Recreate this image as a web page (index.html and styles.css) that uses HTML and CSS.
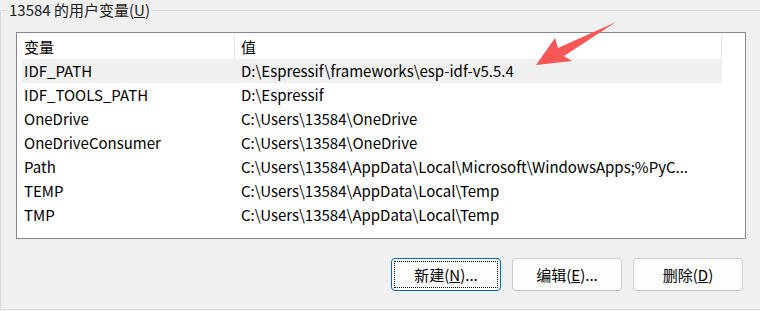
FILE: index.html
```html
<!DOCTYPE html>
<html lang="zh-CN">
<head>
  <meta charset="UTF-8">
  <title>用户变量</title>
  <link rel="stylesheet" href="styles.css">
</head>
<body>
  <fieldset class="group">
    <legend>13584 的用户变量(<u>U</u>)</legend>

    <div class="listview">
      <div class="header">
        <div class="hcell name">变量</div>
        <div class="hcell value">值</div>
      </div>
      <div class="row hover">
        <div class="cell name">IDF_PATH</div>
        <div class="cell value">D:\Espressif\frameworks\esp-idf-v5.5.4</div>
      </div>
      <div class="row">
        <div class="cell name">IDF_TOOLS_PATH</div>
        <div class="cell value">D:\Espressif</div>
      </div>
      <div class="row">
        <div class="cell name">OneDrive</div>
        <div class="cell value">C:\Users\13584\OneDrive</div>
      </div>
      <div class="row">
        <div class="cell name">OneDriveConsumer</div>
        <div class="cell value">C:\Users\13584\OneDrive</div>
      </div>
      <div class="row">
        <div class="cell name">Path</div>
        <div class="cell value">C:\Users\13584\AppData\Local\Microsoft\WindowsApps;%PyC...</div>
      </div>
      <div class="row">
        <div class="cell name">TEMP</div>
        <div class="cell value">C:\Users\13584\AppData\Local\Temp</div>
      </div>
      <div class="row">
        <div class="cell name">TMP</div>
        <div class="cell value">C:\Users\13584\AppData\Local\Temp</div>
      </div>
    </div>

    <div class="buttons">
      <button class="focused"><span>新建(<u>N</u>)...</span></button>
      <button><span>编辑(<u>E</u>)...</span></button>
      <button><span>删除(<u>D</u>)</span></button>
    </div>
  </fieldset>

  <!-- red annotation arrow pointing at the IDF_PATH value -->
  <svg class="arrow" width="760" height="311" viewBox="0 0 760 311">
    <polygon points="536,65 555,38 558,48 616,22 564,56 572,61" fill="#f75757"/>
  </svg>
</body>
</html>
```

FILE: styles.css
```css
html, body {
  margin: 0;
  padding: 0;
}

body {
  width: 760px;
  height: 311px;
  overflow: hidden;
  background: #f0f0f0;
  font-family: "Noto Sans CJK SC", sans-serif;
  font-size: 15px;
  color: #000;
  position: relative;
}

.group {
  box-sizing: border-box;
  width: 760px;
  height: 310px;
  margin: 0;
  padding: 0;
  border: 1px solid #dcdcdc;
  border-right: none;
}

.group legend {
  margin-left: 6px;
  padding: 0 2px;
  line-height: 20px;
  color: #1a1a1a;
}

.listview {
  box-sizing: border-box;
  height: 207px;
  margin: 12px 14px 0 15px;
  border: 1px solid #828790;
  background: #fff;
}

.header {
  display: flex;
  height: 26px;
  line-height: 26px;
}

.hcell {
  box-sizing: border-box;
  border-right: 1px solid #e5e5e5;
  margin-top: 1px;
  line-height: 25px;
}

.hcell.name {
  width: 218px;
  padding-left: 7px;
}

.hcell.value {
  width: 487px;
  padding-left: 6px;
}

.row {
  display: flex;
  height: 24px;
  line-height: 24px;
  width: 700px;
  margin-left: 5px;
  white-space: nowrap;
}

.row.hover {
  background: #f0f0f0;
}

.cell.name {
  width: 217px;
  padding-left: 2px;
}

.cell.value {
  flex: 1;
  overflow: hidden;
}

.buttons {
  display: flex;
  justify-content: flex-end;
  gap: 11px;
  margin-top: 19px;
  padding-right: 17px;
}

button {
  box-sizing: border-box;
  width: 110px;
  height: 33px;
  padding: 0;
  border: 1px solid #d0d0d0;
  border-bottom-color: #c2c2c2;
  border-radius: 4px;
  background: #fdfdfd;
  font-family: inherit;
  font-size: 15px;
  color: #000;
}

button.focused {
  border-color: #0067c0;
  padding: 2px;
}

button.focused span {
  display: flex;
  align-items: center;
  justify-content: center;
  height: 100%;
  border: 1px dotted #000;
  box-sizing: border-box;
}

.arrow {
  position: absolute;
  left: 0;
  top: 0;
  pointer-events: none;
}
```
